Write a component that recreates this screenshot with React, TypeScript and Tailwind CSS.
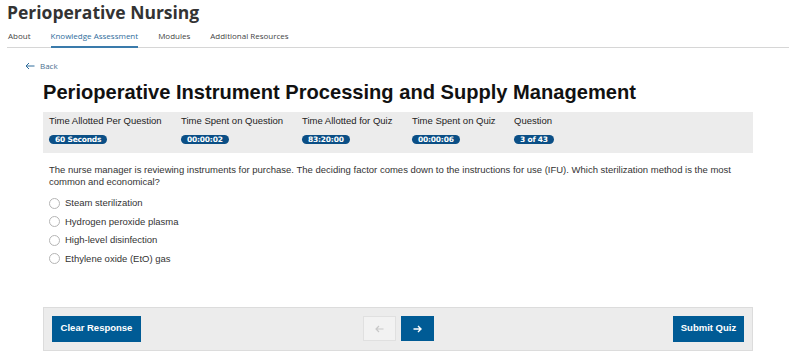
import React from 'react';

const stats = [
  { label: 'Time Allotted Per Question', value: '60 Seconds', w: 'w-[132px]' },
  { label: 'Time Spent on Question', value: '00:00:02', w: 'w-[121px]' },
  { label: 'Time Allotted for Quiz', value: '83:20:00', w: 'w-[110px]' },
  { label: 'Time Spent on Quiz', value: '00:00:06', w: 'w-[102px]' },
  { label: 'Question', value: '3 of 43', w: 'w-[80px]' },
];

const options = [
  'Steam sterilization',
  'Hydrogen peroxide plasma',
  'High-level disinfection',
  'Ethylene oxide (EtO) gas',
];

const tabs = ['About', 'Knowledge Assessment', 'Modules', 'Additional Resources'];

export default function App() {
  return (
    <div className="w-[800px] h-[361px] bg-white overflow-hidden font-['Liberation_Sans',Arial,sans-serif]">
      <div className="pl-[7px] pr-[11px] font-['Open_Sans',sans-serif]">
        <h1 className="text-[17.5px] leading-[24px] font-bold text-[#333]">Perioperative Nursing</h1>
        <nav className="flex gap-[20px] mt-[5px] border-b border-[#d6d6d6] text-[8px] text-[#444]">
          {tabs.map((t, i) => (
            <span
              key={t}
              className={`pb-[4px] pt-[1px] ${i === 0 ? 'pl-[1px]' : ''} ${
                i === 1 ? 'border-b-2 border-[#3a7bab] -mb-px text-[#2f6d9c]' : ''
              }`}
            >
              {t}
            </span>
          ))}
        </nav>
      </div>

      <div className="ml-[25px] mt-[12px] flex items-center gap-[5px] text-[8px] text-[#4a6f8f] font-['Open_Sans',sans-serif]">
        <svg width="10" height="8" viewBox="0 0 10 8" fill="none" stroke="#2f6d9c" strokeWidth="1">
          <path d="M9.5 4H1M4 1L1 4l3 3" />
        </svg>
        <span>Back</span>
      </div>

      <div className="ml-[43px] w-[710px]">
        <h2 className="mt-[7px] text-[20.1px] leading-[26px] font-bold text-[#111]">
          Perioperative Instrument Processing and Supply Management
        </h2>

        <div className="mt-[7px] bg-[#ececec] h-[41px] pl-[6px] pt-[3px] flex">
          {stats.map((s) => (
            <div key={s.label} className={`${s.w} flex flex-col`}>
              <span className="text-[9.5px] leading-[12px] text-[#222]">{s.label}</span>
              <span className="mt-[8px] self-start bg-[#0b4f86] text-white text-[7.5px] font-bold leading-[9px] px-[6px] rounded-full font-['DejaVu_Sans',sans-serif] tracking-[-0.2px]">
                {s.value}
              </span>
            </div>
          ))}
        </div>

        <p className="mt-[11px] ml-[6px] text-[9.5px] leading-[12px] text-[#333]">
          The nurse manager is reviewing instruments for purchase. The deciding factor comes down to the instructions for use (IFU). Which sterilization method is the most common and economical?
        </p>

        <div className="mt-[9px] ml-[6px] flex flex-col gap-[6.5px]">
          {options.map((o) => (
            <label key={o} className="flex items-center gap-[5px] text-[9.5px] leading-[12px] text-[#333]">
              <span className="w-[11px] h-[11px] rounded-full border border-[#b5b5b5] bg-white" />
              {o}
            </label>
          ))}
        </div>

        <div className="mt-[42px] h-[44px] bg-[#ececec] border border-[#dcdcdc] grid grid-cols-[1fr_auto_1fr] items-center px-[8px]">
          <button className="justify-self-start w-[89px] h-[26px] bg-[#005b95] text-white text-[9.5px] font-bold">Clear Response</button>
          <div className="flex gap-[5px]">
            <button className="w-[33px] h-[25px] bg-[#f2f2f2] border border-[#e0e0e0] flex items-center justify-center">
              <svg width="9" height="8" viewBox="0 0 9 8" fill="none" stroke="#c8c8c8" strokeWidth="1.2">
                <path d="M8.5 4H1M4 1L1 4l3 3" />
              </svg>
            </button>
            <button className="w-[33px] h-[25px] bg-[#005b95] flex items-center justify-center">
              <svg width="9" height="8" viewBox="0 0 9 8" fill="none" stroke="#ffffff" strokeWidth="1.4">
                <path d="M0.5 4H8M5 1l3 3-3 3" />
              </svg>
            </button>
          </div>
          <button className="justify-self-end w-[71px] h-[26px] bg-[#005b95] text-white text-[9.5px] font-bold">Submit Quiz</button>
        </div>
      </div>
    </div>
  );
}
